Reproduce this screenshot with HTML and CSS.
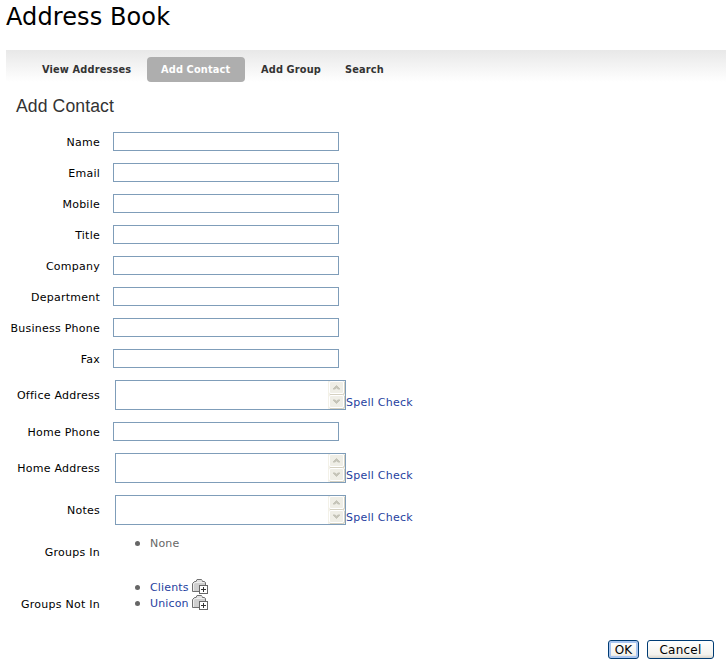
FILE: index.html
```
<!DOCTYPE html>
<html lang="en">
<head>
<meta charset="utf-8">
<title>Address Book</title>
<link rel="stylesheet" href="styles.css">
</head>
<body>
<svg width="0" height="0" class="defs">
  <symbol id="folder" viewBox="0 0 16 16">
    <path d="M.5 12.500V4.500L2.500 2.500H4L5 .5H9.500L10.500 2.500H12.500L13.500 3.500V12.500Z" fill="#cfcfcf" stroke="#707070"/>
    <path d="M5 2H10" stroke="#f4f4f4" stroke-width="1" fill="none"/>
    <path d="M1.500 12V5L3 3.500H12" stroke="#eee" fill="none"/>
    <rect x="7.500" y="6.500" width="8" height="8" fill="#fff" stroke="#666"/>
    <path d="M9 10.500H14M11.500 8V13" stroke="#333" fill="none"/>
  </symbol>
  <symbol id="scroll" viewBox="0 0 17 28">
    <path d="M0 0H17V28H0Z" fill="#f3f1e8"/>
    <rect x="1.500" y=".5" width="14" height="12" rx="1.500" fill="#efeee6" stroke="#fff"/>
    <rect x="1.500" y="14.500" width="14" height="12" rx="1.500" fill="#efeee6" stroke="#fff"/>
    <path d="M2 13.500H14.500Q16.500 13.500 16.500 12V1M2 27.500H14.500Q16.500 27.500 16.500 26V15" fill="none" stroke="#d5d1c1"/>
    <path d="M5 8L8.500 4.500L12 8H10L8.500 6.800L7 8ZM5 19L8.500 22.500L12 19H10L8.500 20.200L7 19Z" fill="#c5c4b8" stroke="#c5c4b8"/>
  </symbol>
</svg>
<h1><span>Address Book</span></h1>
<nav>
  <a class="view">View Addresses</a>
  <a class="active">Add Contact</a>
  <a class="group">Add Group</a>
  <a class="search">Search</a>
</nav>
<h2><span>Add Contact</span></h2>
<form>
  <div class="row"><label>Name</label><input type="text"></div>
  <div class="row"><label>Email</label><input type="text"></div>
  <div class="row"><label>Mobile</label><input type="text"></div>
  <div class="row"><label>Title</label><input type="text"></div>
  <div class="row"><label>Company</label><input type="text"></div>
  <div class="row"><label>Department</label><input type="text"></div>
  <div class="row"><label>Business Phone</label><input type="text"></div>
  <div class="row"><label>Fax</label><input type="text"></div>
  <div class="row tall"><label>Office Address</label><div class="area"><textarea></textarea><svg width="17" height="28"><use href="#scroll"/></svg></div><a class="spell">Spell Check</a></div>
  <div class="row"><label>Home Phone</label><input type="text"></div>
  <div class="row tall"><label>Home Address</label><div class="area"><textarea></textarea><svg width="17" height="28"><use href="#scroll"/></svg></div><a class="spell">Spell Check</a></div>
  <div class="row tall"><label>Notes</label><div class="area"><textarea></textarea><svg width="17" height="28"><use href="#scroll"/></svg></div><a class="spell">Spell Check</a></div>
  <div class="row tall groups-in"><label>Groups In</label><ul><li><span>None</span></li></ul></div>
  <div class="row groups-out"><label>Groups Not In</label><ul>
    <li><a>Clients</a><svg width="16" height="16"><use href="#folder"/></svg></li>
    <li><a>Unicon</a><svg width="16" height="16"><use href="#folder"/></svg></li>
  </ul></div>
  <div class="actions"><button type="button" class="ok">OK</button><button type="button" class="cancel">Cancel</button></div>
</form>
</body>
</html>
```
FILE: styles.css
```
* { box-sizing: border-box; }
body { margin: 0; height: 667px; overflow: hidden; background: #fff; color: #000; font: 11px/16px Verdana, "DejaVu Sans", sans-serif; letter-spacing: .25px; }
.defs { position: absolute; }
h1 { margin: 0; padding-left: 6px; height: 50px; font-size: 24px; line-height: 35px; font-weight: 400; letter-spacing: .1px; }
nav { display: flex; align-items: flex-start; margin-left: 6px; padding: 7px 0 0 22px; height: 32px; background: linear-gradient(#e8e8e8, #fff); }
nav a { height: 25px; padding: 0 14px; color: #333; font-weight: 700; font-size: 9.800px; line-height: 25px; white-space: nowrap; letter-spacing: .15px; }
nav .view { width: 119px; }
nav .active { width: 98px; background: #aeaeae; color: #fff; border-radius: 4px; }
nav .group { width: 86px; padding: 0 0 0 16px; }
h2 { margin: 0; padding: 0 0 0 16px; height: 50px; font: 400 17.600px/49px "Liberation Sans", Arial, sans-serif; letter-spacing: .1px; color: #333; }
form { display: flex; flex-direction: column; gap: 12px; }
.row { display: flex; height: 19px; }
.tall { height: 30px; }
label { width: 100px; margin-right: 13px; padding-top: 2px; align-self: center; text-align: right; white-space: nowrap; }
input { width: 226px; height: 19px; margin: 0; padding: 1px 2px; border: 1px solid #7f9db9; outline: 0; border-radius: 0; background: #fff; }
.area { display: flex; width: 231px; height: 30px; margin-left: 2px; border: 1px solid #7f9db9; }
textarea { flex: 1; min-width: 0; height: 28px; padding: 2px; border: 0; resize: none; outline: 0; overflow: hidden; }
.area svg { flex: none; }
a { color: #1f3fa0; }
.spell { margin-top: 15px; white-space: nowrap; }
ul { list-style: none; margin: 0; padding: 0 0 0 22px; color: #666; }
li { display: flex; align-items: center; height: 16px; }
li::before { content: ""; width: 5px; height: 5px; margin-right: 10px; border-radius: 50%; background: #666; }
li a, li span { padding-top: 2px; letter-spacing: .15px; }
li svg { margin-left: 3px; }
.groups-in ul { margin-top: -2px; }
.groups-out { height: 50px; }
.actions { display: flex; gap: 8px; margin: -1px 12px 0 608px; }
button { height: 19px; padding: 1px 0 0; border: 1px solid #003c74; border-radius: 3px; background: linear-gradient(#fff, #f3f2ed 80%, #d9d5cb); color: #000; font: 12px/16px Verdana, "DejaVu Sans", sans-serif; }
.ok { width: 31px; box-shadow: inset 0 0 0 2px #a9c5f0; }
.cancel { width: 67px; letter-spacing: .25px; }
```
